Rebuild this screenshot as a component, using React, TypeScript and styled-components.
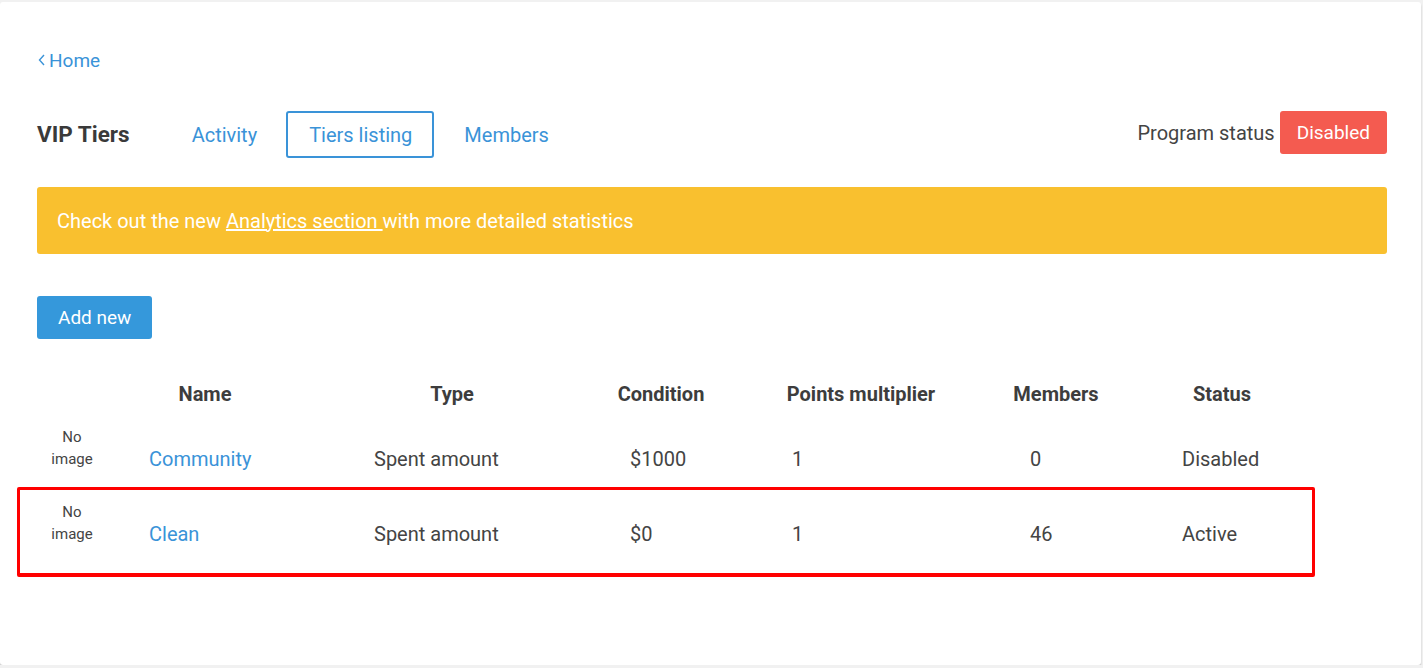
import React from "react";
import styled, { createGlobalStyle } from "styled-components";

const Global = createGlobalStyle`
  html, body { margin: 0; padding: 0; background: #f1f1f1; }
  body { font-family: Roboto, "Liberation Sans", Arial, sans-serif; color: #444; }
  * { box-sizing: border-box; }
`;

const Card = styled.main`
  margin-top: 2px;
  width: 1421px;
  height: 663px;
  background: #fff;
  border-radius: 3px;
  box-shadow: 0 2px 2px rgba(0, 0, 0, 0.2);
  padding: 46px 34px 0 37px;
`;

const BackLink = styled.a`
  display: inline-flex;
  align-items: center;
  gap: 4px;
  height: 24px;
  color: #3a93d8;
  font-size: 19px;
  text-decoration: none;
  padding-left: 1px;
`;

const HeaderRow = styled.div`
  display: flex;
  align-items: flex-start;
  margin-top: 39px;
`;

const Title = styled.h1`
  margin: 0 39px 0 0;
  font-size: 22.5px;
  font-weight: 700;
  line-height: 47px;
  color: #3a3a3a;
`;

const Tabs = styled.nav`
  display: flex;
  gap: 7px;
`;

const Tab = styled.a<{ $active?: boolean }>`
  height: 47px;
  padding: 0 20px 0 21px;
  display: flex;
  align-items: center;
  font-size: 20px;
  color: #3a93d8;
  text-decoration: none;
  border: 2px solid ${(p) => (p.$active ? "#3a93d8" : "transparent")};
  border-radius: 3px;
`;

const StatusGroup = styled.div`
  margin-left: auto;
  display: flex;
  align-items: center;
  gap: 5px;
  height: 43px;
`;

const StatusLabel = styled.span`
  font-size: 20px;
  color: #444;
`;

const Button = styled.button<{ $tone: "red" | "blue" }>`
  height: 43px;
  padding: 0 ${(p) => (p.$tone === "red" ? "17px" : "21px")};
  border: none;
  border-radius: 3px;
  background: ${(p) => (p.$tone === "red" ? "#f45b50" : "#3598db")};
  color: #fff;
  font-family: inherit;
  font-size: 19px;
  cursor: pointer;
`;

const Banner = styled.div`
  margin-top: 29px;
  height: 67px;
  background: #f9c02f;
  border-radius: 3px;
  color: #fff;
  font-size: 20px;
  display: flex;
  align-items: center;
  padding-left: 20px;

  a {
    color: #fff;
    text-decoration: underline;
  }
`;

const Actions = styled.div`
  margin-top: 42px;
`;

const Table = styled.div`
  margin-top: 29px;
  display: grid;
  grid-template-columns: 70px 196px 298px 120px 280px 110px 222px;
`;

const HeadCell = styled.div`
  height: 53px;
  padding-bottom: 2px;
  display: flex;
  align-items: center;
  justify-content: center;
  font-size: 20px;
  font-weight: 700;
  color: #3d3d3d;
`;

const Row = styled.div`
  grid-column: 1 / -1;
  display: grid;
  grid-template-columns: subgrid;
  height: 75px;
  position: relative;
`;

const Cell = styled.div<{ $pad?: number }>`
  display: flex;
  align-items: center;
  padding-left: ${(p) => p.$pad ?? 0}px;
  font-size: 20px;
  color: #444;
`;

const NameLink = styled.a`
  color: #3a93d8;
  text-decoration: none;
`;

const NoImage = styled.div`
  width: 100%;
  text-align: center;
  font-size: 15px;
  line-height: 22px;
  color: #444;
  padding-bottom: 22px;
`;

const Highlight = styled.div`
  position: absolute;
  left: -20px;
  top: -9px;
  width: 1298px;
  height: 90px;
  border: 3px solid #ff0000;
  border-bottom-width: 4px;
  border-radius: 2px;
  pointer-events: none;
`;

const columns = [
  { label: "", pad: 0 },
  { label: "Name", pad: 42 },
  { label: "Type", pad: 71 },
  { label: "Condition", pad: 29 },
  { label: "Points multiplier", pad: 71 },
  { label: "Members", pad: 29 },
  { label: "Status", pad: 71 },
];

const tiers = [
  { name: "Community", type: "Spent amount", condition: "$1000", mult: "1", members: "0", status: "Disabled" },
  { name: "Clean", type: "Spent amount", condition: "$0", mult: "1", members: "46", status: "Active", marked: true },
];

export default function App() {
  return (
    <>
      <Global />
      <Card>
        <BackLink href="#">
          <svg width="7" height="12" viewBox="0 0 7 12" aria-hidden="true">
            <polyline points="6,1 1.5,6 6,11" fill="none" stroke="#3a93d8" strokeWidth="1.4" />
          </svg>
          Home
        </BackLink>

        <HeaderRow>
          <Title>VIP Tiers</Title>
          <Tabs>
            <Tab href="#">Activity</Tab>
            <Tab href="#" $active>
              Tiers listing
            </Tab>
            <Tab href="#">Members</Tab>
          </Tabs>
          <StatusGroup>
            <StatusLabel>Program status</StatusLabel>
            <Button $tone="red">Disabled</Button>
          </StatusGroup>
        </HeaderRow>

        <Banner>
          <span>
            Check out the new <a href="#">Analytics section </a>with more detailed statistics
          </span>
        </Banner>

        <Actions>
          <Button $tone="blue">Add new</Button>
        </Actions>

        <Table>
          {columns.map((c, i) => (
            <HeadCell key={i}>{c.label}</HeadCell>
          ))}
          {tiers.map((t) => (
            <Row key={t.name}>
              <Cell>
                <NoImage>
                  No
                  <br />
                  image
                </NoImage>
              </Cell>
              <Cell $pad={columns[1].pad}>
                <NameLink href="#">{t.name}</NameLink>
              </Cell>
              <Cell $pad={columns[2].pad}>{t.type}</Cell>
              <Cell $pad={columns[3].pad}>{t.condition}</Cell>
              <Cell $pad={columns[4].pad}>{t.mult}</Cell>
              <Cell $pad={columns[5].pad}>{t.members}</Cell>
              <Cell $pad={columns[6].pad}>{t.status}</Cell>
              {t.marked && <Highlight />}
            </Row>
          ))}
        </Table>
      </Card>
    </>
  );
}
